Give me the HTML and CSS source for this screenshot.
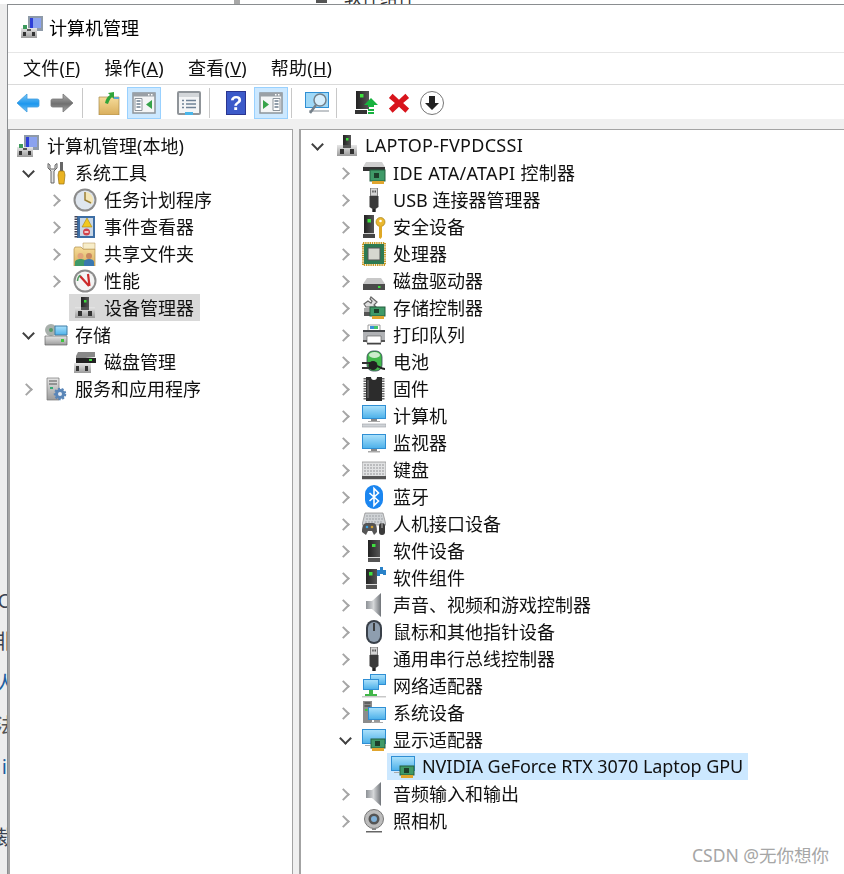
FILE: index.html
```html
<!DOCTYPE html>
<html lang="zh-CN">
<head>
<meta charset="utf-8">
<title>计算机管理</title>
<link rel="stylesheet" href="styles.css">
</head>
<body>
<svg class="defs" aria-hidden="true">
<defs>
<linearGradient id="gScreen" x1="0" y1="0" x2="0" y2="1"><stop offset="0" stop-color="#a9e0fb"/><stop offset="1" stop-color="#4fb2ea"/></linearGradient>
<linearGradient id="gBase" x1="0" y1="0" x2="0" y2="1"><stop offset="0" stop-color="#e6e6e6"/><stop offset="1" stop-color="#9b9b9b"/></linearGradient>
<linearGradient id="gTower" x1="0" y1="0" x2="1" y2="0"><stop offset="0" stop-color="#222"/><stop offset="1" stop-color="#555"/></linearGradient>
<linearGradient id="gBack" x1="0" y1="0" x2="0" y2="1"><stop offset="0" stop-color="#7cc6f5"/><stop offset=".55" stop-color="#1c97ee"/><stop offset="1" stop-color="#7cc6f5"/></linearGradient>
<linearGradient id="gFwd" x1="0" y1="0" x2="0" y2="1"><stop offset="0" stop-color="#b0b0b0"/><stop offset=".55" stop-color="#6f6f6f"/><stop offset="1" stop-color="#aaa"/></linearGradient>
<linearGradient id="gFolder" x1="0" y1="0" x2="0" y2="1"><stop offset="0" stop-color="#f6dc9a"/><stop offset="1" stop-color="#d9ae5b"/></linearGradient>
<linearGradient id="gSpeaker" x1="0" y1="0" x2="1" y2="0"><stop offset="0" stop-color="#8d9196"/><stop offset=".5" stop-color="#d5d7d9"/><stop offset="1" stop-color="#6f7378"/></linearGradient>
<symbol id="server" viewBox="0 0 24 24"><path d="M8 1h8v10H8z" fill="url(#gTower)"/><rect x="11" y="4" width="2.500" height="2.500" fill="#3fe03f"/><path d="M2 11h20v11H2z" fill="url(#gBase)"/><path d="M8 11h8v3H8z" fill="#555"/><rect x="5" y="15" width="4" height="5" fill="#333"/><rect x="15" y="15" width="4" height="5" fill="#333"/></symbol>
<symbol id="mgmt" viewBox="0 0 24 24"><path d="M8 1h15v15H8z" fill="#8e9aa8"/><path d="M10 3h11v10H10z" fill="#2e3fd8"/><path d="M13 3h8v10h-8z" fill="#8aa2ef"/><path d="M1 13h16v10H1z" fill="url(#gBase)"/><path d="M3 10h4v4H3z" fill="#3d9a5c"/><rect x="3" y="17" width="3" height="4" fill="#333"/><rect x="12" y="17" width="3" height="4" fill="#333"/><path d="M7 14h4v2H7z" fill="#555"/></symbol>
<symbol id="tools" viewBox="0 0 24 24"><path d="M6 8V4L4 2.500V7l3 3v12h3V10l3-3V2.500L11 4v4z" fill="#e2e2e2" stroke="#666"/><path d="M16 1h3v9h-3z" fill="#666"/><path d="M15 10h5l1 4-1 9h-5l-1-9z" fill="#eab321" stroke="#9a7210" stroke-width=".7"/></symbol>
<symbol id="clock" viewBox="0 0 24 24"><circle cx="12" cy="12" r="11.500" fill="#8c8c8c"/><circle cx="12" cy="12" r="9.500" fill="#dfe6ee"/><path d="M12 12V4a8 8 0 0 1 7 12z" fill="#f4e6b6"/><path d="M12 4v8l6 3" fill="none" stroke="#9a7f36" stroke-width="1.500"/></symbol>
<symbol id="event" viewBox="0 0 24 24"><path d="M4 1h18v22H4z" fill="#3d6ea5"/><path d="M7 3h13v18H7z" fill="#c9d7e6"/><path d="M3 1v22" stroke="#445" stroke-width="3" stroke-dasharray="1.500 1"/><path d="M14 3l5 9H9z" fill="#f2c81e" stroke="#a68512" stroke-width=".6"/><circle cx="13.500" cy="17" r="3.500" fill="#d2424a"/><rect x="11.500" y="16.300" width="4" height="1.400" fill="#fff"/></symbol>
<symbol id="share" viewBox="0 0 24 24"><path d="M1 7l1-2h6l2 2h12v17H1z" fill="url(#gFolder)" stroke="#b08f4c" stroke-width=".7"/><path d="M10 1h12v6H10z" fill="#f7edc9" stroke="#b08f4c" stroke-width=".5"/><circle cx="7.500" cy="14" r="3" fill="#e2a37a"/><path d="M2 24v-4c0-2 3-3 5.500-3s5.500 1 5.500 3v4z" fill="#3f9a68"/><circle cx="16" cy="14" r="3" fill="#c98860"/><path d="M11 24v-4c0-2 2.500-3 5-3s5 1 5 3v4z" fill="#3a78b0"/></symbol>
<symbol id="perf" viewBox="0 0 24 24"><circle cx="12" cy="12" r="11.500" fill="#8c8c8c"/><circle cx="12" cy="12" r="9.500" fill="#f4f4f4"/><path d="M7 7l9 10M15 5l1.500 12" stroke="#cc2a2a" stroke-width="2.200" fill="none"/><path d="M4.500 12a7.500 7.500 0 0 1 3-6" stroke="#4a9a5a" stroke-width="1.500" fill="none"/></symbol>
<symbol id="storage" viewBox="0 0 24 24"><circle cx="7" cy="7" r="6" fill="#a9b0ac"/><circle cx="7" cy="7" r="2" fill="#596"/><path d="M11 3h12v9H11z" fill="url(#gScreen)" stroke="#3d7da6"/><path d="M1 13h22v9H1z" fill="url(#gBase)" stroke="#666" stroke-width=".7"/><rect x="17" y="16" width="3" height="3" fill="#3fc43f"/></symbol>
<symbol id="diskm" viewBox="0 0 24 24"><path d="M5 2h17v5L3 9V6z" fill="#888"/><path d="M3 8h20v5H3z" fill="#222"/><rect x="16" y="9" width="3" height="2" fill="#3fe03f"/><path d="M1 13h17v10H1z" fill="url(#gBase)"/><rect x="3" y="16" width="3" height="5" fill="#333"/><rect x="12" y="16" width="3" height="5" fill="#333"/></symbol>
<symbol id="services" viewBox="0 0 24 24"><path d="M3 1h12v22H3z" fill="url(#gBase)" stroke="#777" stroke-width=".7"/><path d="M5 4h8M5 7h8" stroke="#555" stroke-width="1.200"/><rect x="6" y="10" width="3" height="2" fill="#3a7"/><circle cx="16" cy="17" r="5" fill="#5a86b8" stroke="#5a86b8" stroke-width="2.500" stroke-dasharray="2 1.500"/><circle cx="16" cy="17" r="2" fill="#e8eef5"/></symbol>
<symbol id="ide" viewBox="0 0 24 24"><path d="M4 1h16l3 5H1z" fill="#cfcfcf"/><path d="M1 6h22v4H1z" fill="#333"/><rect x="8" y="9" width="15" height="11" fill="#3f9a68" stroke="#245f3e"/><rect x="12" y="12" width="5" height="5" fill="#1d3f2b"/><path d="M10 20h12v3H10z" fill="#e0a52e"/></symbol>
<symbol id="usb" viewBox="0 0 24 24"><path d="M8.500 0h7v8h-7z" fill="#d5d5d5" stroke="#666" stroke-width=".8"/><rect x="10.300" y="2.500" width="1.300" height="2" fill="#444"/><rect x="12.600" y="2.500" width="1.300" height="2" fill="#444"/><path d="M7.500 8h9v11l-3 2h-3l-3-2z" fill="#3a3a3a"/><path d="M10.300 21h3.400v3h-3.400z" fill="#222"/></symbol>
<symbol id="security" viewBox="0 0 24 24"><path d="M2 0h10v19H2z" fill="url(#gTower)"/><rect x="5.500" y="4" width="3.500" height="3.500" fill="#3fe03f"/><path d="M1 19h12v4H1z" fill="#444"/><path d="M2 18h10v1H2z" fill="#ccc"/><circle cx="18.500" cy="7" r="4.500" fill="#eab830" stroke="#a57f18" stroke-width=".7"/><circle cx="18.500" cy="6" r="1.300" fill="#fff"/><path d="M17 11h3v11l-1.500 2-1.500-1.500z" fill="#dfa825"/></symbol>
<symbol id="cpu" viewBox="0 0 24 24"><path d="M1 1h22v22H1z" fill="none" stroke="#c99a25" stroke-width="2" stroke-dasharray="1.400 .8"/><rect x="2" y="2" width="20" height="20" fill="#2d7a52"/><rect x="6" y="6" width="12" height="12" fill="#d6d7d0" stroke="#555"/></symbol>
<symbol id="drive" viewBox="0 0 24 24"><path d="M5 9h14l4 6H1z" fill="#c8c8c8"/><path d="M1 15h22v6H1z" fill="#4b4b4b"/><rect x="16" y="17" width="2.500" height="2" fill="#3fe03f"/></symbol>
<symbol id="storctl" viewBox="0 0 24 24"><path d="M9 1l6 5-3 3 2 2H4l-2-3 4-3 3 2 1-2-2-2z" fill="#e0e0e0" stroke="#666" stroke-width="1.200"/><path d="M2 12h9v4H2z" fill="#a8a8a8"/><path d="M2 16h8v4H2z" fill="#555"/><rect x="8" y="11" width="15" height="9" fill="#3f9a68" stroke="#245f3e"/><rect x="12" y="13" width="5" height="4" fill="#1d3f2b"/><path d="M10 20h12v3H10z" fill="#e0a52e"/></symbol>
<symbol id="printer" viewBox="0 0 24 24"><path d="M6 2h12v6H6z" fill="#fff" stroke="#777" stroke-width=".7"/><path d="M8 3h4v3H8z" fill="#3a8fd8"/><path d="M12 3h4v3h-4z" fill="#3fc46a"/><path d="M1 7h22v10H1z" fill="#b0b2b5"/><path d="M1 7h22v2H1z" fill="#44474a"/><path d="M5 13h14v7H5z" fill="#fff" stroke="#666" stroke-width=".7"/><path d="M1 17h4v2H1zM19 17h4v2h-4z" fill="#555"/><path d="M5 20h14v1.500H5z" fill="#444"/></symbol>
<symbol id="battery" viewBox="0 0 24 24"><rect x="5" y="1" width="15" height="20" rx="6" fill="#43b84c" stroke="#345" stroke-width=".8"/><ellipse cx="12.500" cy="5" rx="5.500" ry="3" fill="#cdeccd"/><path d="M0 13h8M0 18h8" stroke="#333" stroke-width="2"/><circle cx="11" cy="15.500" r="4.500" fill="#222"/><path d="M14 16c4 0 4 3 9 3" stroke="#222" stroke-width="2" fill="none"/></symbol>
<symbol id="firmware" viewBox="0 0 24 24"><path d="M3 1v22M21 1v22" stroke="#666" stroke-width="3" stroke-dasharray="1.500 1"/><path d="M4 0h5a3 3 0 0 0 6 0h5v24H4z" fill="#2c2c2c"/><path d="M6 3v18" stroke="#777"/></symbol>
<symbol id="computer" viewBox="0 0 24 24"><path d="M0 1h24v14H0z" fill="#2f8fd4"/><path d="M1 2h22v12H1z" fill="url(#gScreen)"/><path d="M9 15h6v2H9z" fill="#888"/><path d="M6 17h12v1H6z" fill="#aaa"/><path d="M0 20h24v3H0z" fill="#cfd3d7" stroke="#9aa0a6" stroke-width=".6"/></symbol>
<symbol id="monitor" viewBox="0 0 24 24"><path d="M0 3h24v15H0z" fill="#2f8fd4"/><path d="M1 4h22v13H1z" fill="url(#gScreen)"/><path d="M9 18h6v2H9z" fill="#888"/><path d="M6 20h12v1.500H6z" fill="#aaa"/></symbol>
<symbol id="keyboard" viewBox="0 0 24 24"><path d="M0 4h24v17H0z" fill="#e1e2e3" stroke="#888" stroke-width=".7"/><path d="M2 7h20M2 10h20M2 13h20M2 16h20" stroke="#aeb0b2" stroke-width="1.500" stroke-dasharray="2 1"/><path d="M0 18h24v3H0z" fill="#555"/></symbol>
<symbol id="bt" viewBox="0 0 24 24"><rect x="3" y="0" width="18" height="24" rx="9" fill="#1b86f0"/><path d="M7.500 8l9 8-4.500 4.500V3.500L16.500 8l-9 8" fill="none" stroke="#fff" stroke-width="1.600"/></symbol>
<symbol id="hid" viewBox="0 0 24 24"><path d="M3 1h18l3 12H0z" fill="#d0d3d6" stroke="#888" stroke-width=".7"/><path d="M4 4h16M4 7h17M3 10h18" stroke="#9da1a5" stroke-dasharray="2 1"/><path d="M0 20c0-7 2-9 5-9h6c3 0 4 3 4 9l-3 3-2-4H6l-2 4z" fill="#555"/><circle cx="5" cy="15" r="1.300" fill="#3fa2e0"/><circle cx="10" cy="15" r="1.300" fill="#d2a030"/><rect x="17" y="11" width="6" height="12" rx="3" fill="#3a3a3a"/><path d="M20 11v5" stroke="#bbb"/></symbol>
<symbol id="softdev" viewBox="0 0 24 24"><path d="M6 1h12v18H6z" fill="url(#gTower)"/><rect x="10" y="5" width="3.500" height="3" fill="#3fe03f"/><path d="M6 19h12v4H6z" fill="#555"/><path d="M6 18h12v1H6z" fill="#ddd"/></symbol>
<symbol id="softcomp" viewBox="0 0 24 24"><path d="M4 3h11v16H4z" fill="url(#gTower)"/><rect x="7" y="6" width="3.500" height="3.500" fill="#3fe03f"/><path d="M4 19h11v4H4z" fill="#555"/><path d="M4 18h11v1H4z" fill="#ddd"/><path d="M15 4h3V1h3v3h3v5h-3v-1h-3v2h-3z" fill="#2a82c8"/></symbol>
<symbol id="sound" viewBox="0 0 24 24"><path d="M4 8h6l9-8v24l-9-8H4z" fill="url(#gSpeaker)"/></symbol>
<symbol id="mouse" viewBox="0 0 24 24"><rect x="4" y="0" width="16" height="24" rx="8" fill="#394049"/><rect x="6" y="2" width="12" height="20" rx="6" fill="#8e9eaf"/><path d="M12 3v8" stroke="#333" stroke-width="1.800"/></symbol>
<symbol id="net" viewBox="0 0 24 24"><path d="M8 0h16v11H8z" fill="#2f8fd4"/><path d="M9 1h14v9H9z" fill="url(#gScreen)"/><path d="M1 5h16v11H1z" fill="#2f8fd4"/><path d="M2 6h14v9H2z" fill="url(#gScreen)"/><path d="M7 16h4v4H7z" fill="#41b649"/><path d="M3 20h12v2H3z" fill="#41b649"/><path d="M0 22h24v1.500H0z" fill="#c8c8c8"/></symbol>
<symbol id="sysdev" viewBox="0 0 24 24"><path d="M1 0h9v22H1z" fill="#8c8c8c"/><path d="M2.500 2h6M2.500 5h6" stroke="#333" stroke-width="1.200"/><rect x="3" y="8" width="2.500" height="2" fill="#3fc43f"/><path d="M6 6h18v13H6z" fill="#2f8fd4"/><path d="M7 7h16v11H7z" fill="url(#gScreen)"/><path d="M12 19h6v2h-6z" fill="#999"/><path d="M9 21h12v1H9z" fill="#aaa"/></symbol>
<symbol id="display" viewBox="0 0 24 24"><path d="M0 1h24v15H0z" fill="#2f8fd4"/><path d="M1 2h22v13H1z" fill="url(#gScreen)"/><rect x="9" y="11" width="14" height="9" fill="#3f9a68" stroke="#245f3e"/><rect x="13" y="13" width="5" height="5" fill="#1d3f2b"/><path d="M10 20h12v3H10z" fill="#e0a52e"/><path d="M3 17h5v1H3z" fill="#aaa"/></symbol>
<symbol id="cam" viewBox="0 0 24 24"><circle cx="12" cy="10" r="9.500" fill="#bcbcbc" stroke="#777"/><circle cx="12" cy="10" r="5.500" fill="#555"/><circle cx="12" cy="10" r="3" fill="#7fb0d8"/><path d="M10 19h4v2h-4z" fill="#888"/><path d="M4 22h16v1.500H4z" fill="#666"/></symbol>
<symbol id="tb-back" viewBox="0 0 24 24"><path d="M1 12L11 3v5h10c2 0 2 1 2 2v4c0 1 0 2-2 2H11v5z" fill="url(#gBack)" stroke="#3c9ce0" stroke-width=".8"/></symbol>
<symbol id="tb-fwd" viewBox="0 0 24 24"><path d="M23 12L13 3v5H3c-2 0-2 1-2 2v4c0 1 0 2 2 2h10v5z" fill="url(#gFwd)" stroke="#777" stroke-width=".8"/></symbol>
<symbol id="tb-up" viewBox="0 0 24 24"><path d="M2 6h20v18H2z" fill="url(#gFolder)" stroke="#a88a4a" stroke-width=".7"/><path d="M17 6h5v2h-5z" fill="#5aa3d8"/><path d="M8 18c1-4 2-6 5-8l-2-2 6-1 0 7-2-2c-2 2-3 4-4 7z" fill="#31a53a" transform="translate(0 -6)"/></symbol>
<symbol id="tb-pane-l" viewBox="0 0 24 24"><rect x="1" y="2" width="22" height="20" fill="#f4f5f6" stroke="#8d949b" stroke-width="1.500"/><path d="M1 2h22v3.500H1z" fill="#9aa0a6"/><path d="M16 3h1.500v1.500H16zM19 3h1.500v1.500H19z" fill="#fff"/><path d="M3 7.500h7v12H3z" fill="#fff" stroke="#8d949b"/><path d="M4.500 10h4M4.500 13h4M4.500 16h4" stroke="#6c7d8e" stroke-width="1.500"/><path d="M20 9v9l-6-4.500z" fill="#37a34a"/></symbol>
<symbol id="tb-pane-r" viewBox="0 0 24 24"><rect x="1" y="2" width="22" height="20" fill="#f4f5f6" stroke="#8d949b" stroke-width="1.500"/><path d="M1 2h22v3.500H1z" fill="#9aa0a6"/><path d="M16 3h1.500v1.500H16zM19 3h1.500v1.500H19z" fill="#fff"/><path d="M14 7.500h7v12h-7z" fill="#fff" stroke="#8d949b"/><path d="M15.500 10h4M15.500 13h4M15.500 16h4" stroke="#6c7d8e" stroke-width="1.500"/><path d="M4 9v9l6-4.500z" fill="#37a34a"/></symbol>
<symbol id="tb-prop" viewBox="0 0 24 24"><rect x="0" y="0" width="24" height="24" rx="2" fill="#8f9499"/><path d="M2 2h20v20H2z" fill="#f4f5f6"/><path d="M2 2h20v4H2z" fill="#d3d6d9"/><path d="M5 9.500h2M9 9.500h10M5 13h2M9 13h10M5 16.500h2M9 16.500h10" stroke="#6f8296" stroke-width="1.500"/><path d="M8 21h8v3H8z" fill="#4ab6ea"/></symbol>
<symbol id="tb-help" viewBox="0 0 24 24"><path d="M2 0h20v24H2z" fill="#2a3590"/><path d="M3 1h18v22H3z" fill="#3c5ac9"/><text x="12" y="19" font-family="Liberation Sans" font-size="20" font-weight="700" fill="#fff" text-anchor="middle">?</text></symbol>
<symbol id="tb-scan" viewBox="0 0 24 24"><path d="M0 1h24v16H0z" fill="#2f8fd4"/><path d="M1 2h22v14H1z" fill="#9fd8f7"/><path d="M4 19h20v2H4z" fill="#c2c6ca"/><circle cx="15" cy="9" r="6" fill="#e8f6fd" fill-opacity=".75" stroke="#74808a" stroke-width="1.500"/><path d="M11 14l-6 8" stroke="#74808a" stroke-width="2.500"/></symbol>
<symbol id="tb-update" viewBox="0 0 24 24"><path d="M1 0h13v18H1z" fill="url(#gTower)"/><rect x="5" y="3" width="3.500" height="3.500" fill="#3fe03f"/><path d="M0 19h12v4H0z" fill="#333"/><path d="M16 7l7 7h-4v2h-6v-2H9z" fill="#18b23f"/><path d="M13 18h6v2h-6zM13 21h6v2h-6z" fill="#18b23f"/></symbol>
<symbol id="tb-del" viewBox="0 0 24 24"><path d="M5 2L12 8.500 19 2 23 6.500 16.500 12 23 18 19 22.500 12 16 5 22.500 1 18 7.500 12 1 6.500z" fill="#d8141c"/></symbol>
<symbol id="tb-down" viewBox="0 0 24 24"><circle cx="12" cy="12" r="11.500" fill="#fff" stroke="#777"/><path d="M9 5h6v7h4l-7 7-7-7h4z" fill="#222"/></symbol>
</defs>
</svg>

<div class="behind-top"><span class="bt-bar"></span><svg class="ic bt-ic"><use href="#softcomp"/></svg><span class="bt-text">软件组件</span></div>
<div class="behind-left">
  <span class="frag f1">:</span>
  <span class="frag f2">O</span>
  <span class="frag f3">非</span>
  <span class="frag f4">人</span>
  <span class="frag f5">法</span>
  <span class="frag f6">i</span>
  <span class="frag f7">裁</span>
</div>

<main class="window">
  <header class="titlebar">
    <svg class="ic"><use href="#mgmt"/></svg>
    <span>计算机管理</span>
  </header>
  <nav class="menubar">
    <span>文件(<u>F</u>)</span>
    <span>操作(<u>A</u>)</span>
    <span>查看(<u>V</u>)</span>
    <span>帮助(<u>H</u>)</span>
  </nav>
  <div class="toolbar">
    <button class="tb"><svg><use href="#tb-back"/></svg></button>
    <button class="tb"><svg><use href="#tb-fwd"/></svg></button>
    <i class="sep m3"></i>
    <button class="tb narrow m11"><svg><use href="#tb-up"/></svg></button>
    <button class="tb on m4"><svg><use href="#tb-pane-l"/></svg></button>
    <button class="tb m11"><svg><use href="#tb-prop"/></svg></button>
    <i class="sep m3"></i>
    <button class="tb narrow m11"><svg><use href="#tb-help"/></svg></button>
    <button class="tb on m4"><svg><use href="#tb-pane-r"/></svg></button>
    <i class="sep m3"></i>
    <button class="tb m8"><svg><use href="#tb-scan"/></svg></button>
    <i class="sep m2"></i>
    <button class="tb narrow m15"><svg><use href="#tb-update"/></svg></button>
    <button class="tb narrow small m3"><svg><use href="#tb-del"/></svg></button>
    <button class="tb m2"><svg><use href="#tb-down"/></svg></button>
  </div>
  <div class="strip"></div>
  <div class="panes">
    <section class="pane left">
      <ul class="tree">
        <li class="row l0"><svg class="ic"><use href="#mgmt"/></svg><span>计算机管理(本地)</span></li>
        <li class="row l1"><i class="tw open"></i><svg class="ic"><use href="#tools"/></svg><span>系统工具</span></li>
        <li class="row l2"><i class="tw shut"></i><svg class="ic"><use href="#clock"/></svg><span>任务计划程序</span></li>
        <li class="row l2"><i class="tw shut"></i><svg class="ic"><use href="#event"/></svg><span>事件查看器</span></li>
        <li class="row l2"><i class="tw shut"></i><svg class="ic"><use href="#share"/></svg><span>共享文件夹</span></li>
        <li class="row l2"><i class="tw shut"></i><svg class="ic"><use href="#perf"/></svg><span>性能</span></li>
        <li class="row l2"><i class="tw"></i><div class="sel grey"><svg class="ic"><use href="#server"/></svg><span>设备管理器</span></div></li>
        <li class="row l1"><i class="tw open"></i><svg class="ic"><use href="#storage"/></svg><span>存储</span></li>
        <li class="row l2"><i class="tw"></i><svg class="ic"><use href="#diskm"/></svg><span>磁盘管理</span></li>
        <li class="row l1"><i class="tw shut"></i><svg class="ic"><use href="#services"/></svg><span>服务和应用程序</span></li>
      </ul>
    </section>
    <section class="pane right">
      <ul class="tree">
        <li class="row r0"><i class="tw open"></i><svg class="ic"><use href="#server"/></svg><span class="wide">LAPTOP-FVPDCSSI</span></li>
        <li class="row r1"><i class="tw shut"></i><svg class="ic"><use href="#ide"/></svg><span class="wide">IDE ATA/ATAPI 控制器</span></li>
        <li class="row r1"><i class="tw shut"></i><svg class="ic"><use href="#usb"/></svg><span>USB 连接器管理器</span></li>
        <li class="row r1"><i class="tw shut"></i><svg class="ic"><use href="#security"/></svg><span>安全设备</span></li>
        <li class="row r1"><i class="tw shut"></i><svg class="ic"><use href="#cpu"/></svg><span>处理器</span></li>
        <li class="row r1"><i class="tw shut"></i><svg class="ic"><use href="#drive"/></svg><span>磁盘驱动器</span></li>
        <li class="row r1"><i class="tw shut"></i><svg class="ic"><use href="#storctl"/></svg><span>存储控制器</span></li>
        <li class="row r1"><i class="tw shut"></i><svg class="ic"><use href="#printer"/></svg><span>打印队列</span></li>
        <li class="row r1"><i class="tw shut"></i><svg class="ic"><use href="#battery"/></svg><span>电池</span></li>
        <li class="row r1"><i class="tw shut"></i><svg class="ic"><use href="#firmware"/></svg><span>固件</span></li>
        <li class="row r1"><i class="tw shut"></i><svg class="ic"><use href="#computer"/></svg><span>计算机</span></li>
        <li class="row r1"><i class="tw shut"></i><svg class="ic"><use href="#monitor"/></svg><span>监视器</span></li>
        <li class="row r1"><i class="tw shut"></i><svg class="ic"><use href="#keyboard"/></svg><span>键盘</span></li>
        <li class="row r1"><i class="tw shut"></i><svg class="ic"><use href="#bt"/></svg><span>蓝牙</span></li>
        <li class="row r1"><i class="tw shut"></i><svg class="ic"><use href="#hid"/></svg><span>人机接口设备</span></li>
        <li class="row r1"><i class="tw shut"></i><svg class="ic"><use href="#softdev"/></svg><span>软件设备</span></li>
        <li class="row r1"><i class="tw shut"></i><svg class="ic"><use href="#softcomp"/></svg><span>软件组件</span></li>
        <li class="row r1"><i class="tw shut"></i><svg class="ic"><use href="#sound"/></svg><span>声音、视频和游戏控制器</span></li>
        <li class="row r1"><i class="tw shut"></i><svg class="ic"><use href="#mouse"/></svg><span>鼠标和其他指针设备</span></li>
        <li class="row r1"><i class="tw shut"></i><svg class="ic"><use href="#usb"/></svg><span>通用串行总线控制器</span></li>
        <li class="row r1"><i class="tw shut"></i><svg class="ic"><use href="#net"/></svg><span>网络适配器</span></li>
        <li class="row r1"><i class="tw shut"></i><svg class="ic"><use href="#sysdev"/></svg><span>系统设备</span></li>
        <li class="row r1"><i class="tw open"></i><svg class="ic"><use href="#display"/></svg><span>显示适配器</span></li>
        <li class="row r2"><i class="tw"></i><div class="sel blue"><svg class="ic"><use href="#display"/></svg><span class="tight">NVIDIA GeForce RTX 3070 Laptop GPU</span></div></li>
        <li class="row r1"><i class="tw shut"></i><svg class="ic"><use href="#sound"/></svg><span>音频输入和输出</span></li>
        <li class="row r1"><i class="tw shut"></i><svg class="ic"><use href="#cam"/></svg><span>照相机</span></li>
      </ul>
    </section>
  </div>
</main>
<div class="watermark">CSDN @无你想你</div>
</body>
</html>
```

FILE: styles.css
```css
* { box-sizing: border-box; }
html, body { margin: 0; padding: 0; }
body {
  position: relative;
  width: 844px;
  height: 874px;
  overflow: hidden;
  background: #ededed;
  font-family: "Noto Sans", "Noto Sans CJK SC", sans-serif;
  font-size: 18px;
  color: #111;
  padding: 4px 0 0 7px;
}
.defs { position: absolute; width: 0; height: 0; }
ul { list-style: none; margin: 0; padding: 0; }
i { font-style: normal; }

.behind-top { position: absolute; left: 0; top: 0; width: 844px; height: 4px; overflow: hidden; background: #fff; }
.bt-bar { position: absolute; left: 234px; top: 0; width: 6px; height: 4px; background: #a8a8a8; }
.bt-ic { position: absolute; left: 312px; top: -20px; }
.bt-text { position: absolute; left: 344px; top: -16px; line-height: 27px; color: #333; }

.behind-left { position: absolute; left: 0; top: 0; width: 7px; height: 874px; overflow: hidden; }
.frag { position: absolute; right: -8px; font-size: 20px; line-height: 24px; color: #3a4250; }
.f1 { top: 431px; }
.f2 { top: 589px; right: -6px; }
.f3 { top: 630px; }
.f4 { top: 672px; color: #1d5f9f; }
.f5 { top: 714px; color: #555; }
.f6 { top: 755px; right: 0; color: #1d5f9f; }
.f7 { top: 826px; }

.window {
  position: relative;
  width: 860px;
  height: 890px;
  border: 1px solid #8a8d90;
  border-right: 0;
  background: #fff;
  display: flex;
  flex-direction: column;
  filter: blur(.35px);
}
.titlebar {
  height: 47px;
  display: flex;
  align-items: center;
  gap: 5px;
  padding: 0 0 3px 12px;
  color: #000;
}
.titlebar .ic { width: 24px; height: 24px; }
.menubar {
  height: 33px;
  display: flex;
  align-items: center;
  gap: 24px;
  padding: 0 0 3px 15px;
  border-top: 1px solid #e6e6e6;
  border-bottom: 1px solid #dadada;
  letter-spacing: .25px;
}
.menubar span { white-space: nowrap; }
.toolbar {
  height: 34px;
  display: flex;
  align-items: center;
  padding: 2px 0 0 3px;
  background: #fff;
}
.tb {
  width: 34px;
  height: 32px;
  padding: 0;
  margin: 0;
  border: 1px solid transparent;
  background: none;
  display: flex;
  align-items: center;
  justify-content: center;
  flex: none;
}
.tb svg { width: 24px; height: 24px; }
.tb.narrow { width: 29px; }
.tb.small svg { width: 22px; height: 22px; }
.tb.on { background: #cce8ff; border-color: #99d1ff; }
.sep { width: 1px; height: 30px; background: #c8c8c8; flex: none; }
.m2 { margin-left: 2px; }
.m3 { margin-left: 3px; }
.m4 { margin-left: 4px; }
.m8 { margin-left: 8px; }
.m11 { margin-left: 11px; }
.m15 { margin-left: 15px; }
.strip { height: 10px; background: #f0f0f0; }
.panes {
  flex: 1;
  display: flex;
  gap: 6px;
  background: #f0f0f0;
}
.pane { background: #fff; border: 1px solid #a3a3a3; border-bottom: 0; }
.pane.left { width: 285px; flex: none; border-left-width: 2px; }
.pane.right { flex: 1; border-right: 0; border-left-width: 2px; }
.tree { padding-top: 2px; }
.row { height: 27px; display: flex; align-items: center; white-space: nowrap; }
.row span { padding-bottom: 2px; }
.ic { width: 24px; height: 24px; flex: none; }
.row .ic { margin-right: 7px; }
.sel { display: flex; align-items: center; height: 27px; margin-left: -4px; padding: 0 6px 0 4px; }
.sel .ic { flex: none; }
.sel.grey { background: #d9d9d9; }
.sel.blue { background: #cce8ff; padding-right: 5px; }
.tw { width: 12px; height: 12px; flex: none; position: relative; }
.tw.shut::before, .tw.open::before {
  content: "";
  position: absolute;
  width: 7px;
  height: 7px;
  border-right: 2px solid #a6a6a6;
  border-bottom: 2px solid #a6a6a6;
}
.tw.shut::before { left: 0; top: 2px; transform: rotate(-45deg); }
.tw.open::before { left: 2px; top: 0; transform: rotate(45deg); border-color: #404040; }
.l0 { padding-left: 6px; }
.l1 { padding-left: 12px; }
.l1 .tw { margin-right: 10px; }
.l2 { padding-left: 40px; }
.l2 .tw { margin-right: 11px; }
.r0 { padding-left: 10px; }
.r0 .tw { margin-right: 12px; }
.r0 .ic { margin-right: 6px; }
.r1 { padding-left: 38px; }
.r1 .tw { margin-right: 11px; }
.r2 { padding-left: 67px; }
.r2 .tw { margin-right: 11px; }
.wide { letter-spacing: .3px; }
.tight { letter-spacing: -.06px; }
.watermark {
  position: absolute;
  left: 692px;
  top: 844px;
  font-size: 17.5px;
  line-height: 22px;
  color: #a6a6a6;
  white-space: nowrap;
}
```
